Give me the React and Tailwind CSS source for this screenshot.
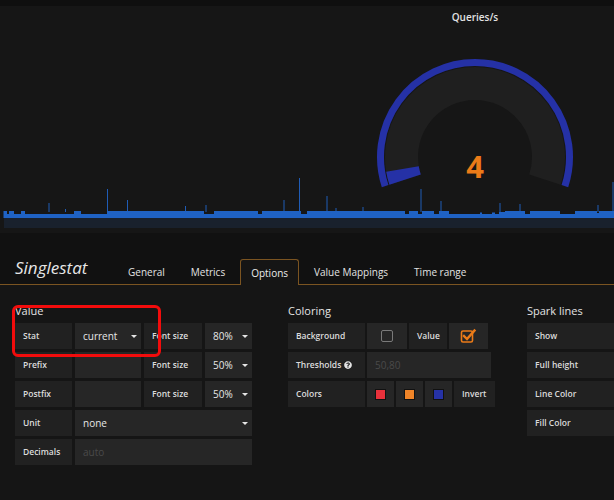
import React from "react";
import { FaQuestionCircle } from "react-icons/fa";

const CX = 475;
const CY = 157;
function pt(r, deg) {
  const a = (deg * Math.PI) / 180;
  return [CX + r * Math.cos(a), CY + r * Math.sin(a)];
}
function arc(r, a0, a1) {
  const [x0, y0] = pt(r, a0);
  const [x1, y1] = pt(r, a1);
  const large = a1 - a0 > 180 ? 1 : 0;
  return `M ${x0.toFixed(2)} ${y0.toFixed(2)} A ${r} ${r} 0 ${large} 1 ${x1.toFixed(2)} ${y1.toFixed(2)}`;
}

const steps = [
  [3.5, 211], [7, 214], [9, 211], [14, 214], [21, 211], [25, 214], [74, 211], [81, 214],
  [107, 211], [204, 214], [214, 211], [258, 214], [262, 211], [301, 214], [307, 211],
  [405, 214], [409, 211], [418, 214], [422, 211], [434, 214], [439, 211], [449, 214],
  [480, 212.5], [482, 214], [492, 212.5], [495, 214], [499, 212], [505, 211], [525, 214],
  [530, 211], [560, 214], [575, 211], [597, 213], [599, 211],
];
function sparkPath() {
  let d = "M 3.5 218";
  steps.forEach(([x, t], i) => {
    const next = i < steps.length - 1 ? steps[i + 1][0] : 614;
    d += ` L ${x} ${t} L ${next} ${t}`;
  });
  d += " L 614 218 Z";
  return d;
}
const spikes = [
  [49, 203], [65.5, 209], [107.5, 189], [127.5, 200], [185.5, 206], [206, 205], [284, 200],
  [299.5, 178], [327, 196], [336, 208], [363, 207], [421, 189], [441, 201], [500, 203],
  [520, 204], [598, 205], [613, 182],
];

const START = 162;
const END = 378;
const VALUE_END = START + (4 / 100) * (END - START);

function Caret() {
  return (
    <span className="w-0 h-0 border-l-[3px] border-r-[3px] border-t-[3.5px] border-l-transparent border-r-transparent border-t-[#e6e6e6]" />
  );
}

function Label({ className, children }) {
  return (
    <div
      className={
        "h-[26px] shrink-0 bg-[#212121] flex items-center pl-[8px] text-[8.5px] font-semibold text-[#dcdcdc] whitespace-nowrap overflow-hidden " +
        className
      }
    >
      {children}
    </div>
  );
}

function Input({ className, children, placeholder }) {
  return (
    <div
      className={
        "h-[26px] shrink-0 bg-[#262626] flex items-center pl-[8px] text-[10px] whitespace-nowrap " +
        (placeholder ? "text-[#4a4a4a] " : "text-[#e6e6e6] ") +
        className
      }
    >
      {children}
    </div>
  );
}

function Select({ className, children }) {
  return (
    <div
      className={
        "h-[26px] shrink-0 bg-[#262626] flex items-center justify-between pl-[8px] pr-[4px] text-[10px] text-[#e6e6e6] whitespace-nowrap " +
        className
      }
    >
      <span>{children}</span>
      <Caret />
    </div>
  );
}

function Swatch({ className }) {
  return (
    <div className="h-[26px] w-[27px] shrink-0 bg-[#262626] flex items-center justify-center">
      <span className={"w-[11px] h-[11px] border border-[#111] " + className} />
    </div>
  );
}

export default function App() {
  return (
    <div className="relative w-[614px] h-[500px] overflow-hidden bg-[#151515] font-['Open_Sans',sans-serif]">
      {/* top strip */}
      <div className="h-[6px] bg-[#0f0f0f]" />

      {/* singlestat panel */}
      <div className="relative h-[227px] bg-[#161616]">
        <svg width="614" height="227" viewBox="0 6 614 227" className="block">
          <path d={arc(73.5, START, END)} fill="none" stroke="#1f1f1f" strokeWidth="33" />
          <path d={arc(73.5, START, VALUE_END)} fill="none" stroke="#2531a6" strokeWidth="33" />
          <path d={arc(94.5, START, END)} fill="none" stroke="#2531a6" strokeWidth="7" />
          <rect x="4" y="218" width="610" height="10" fill="#19212d" />
          {spikes.map(([x, t], i) => (
            <rect key={i} x={x - 0.5} y={t} width="1" height={212 - t} fill="#1f5cb6" />
          ))}
          <path d={sparkPath()} fill="#1f62c4" />
        </svg>
        <div className="absolute left-[375px] top-[5px] w-[200px] text-center text-[10px] leading-[12px] font-semibold text-[#e3e3e3]">
          Queries/s
        </div>
        <div className="absolute left-[435px] top-[145px] w-[80px] text-center text-[31px] leading-[31px] font-bold text-[#eb7b18]">
          4
        </div>
      </div>

      {/* editor header */}
      <div className="h-[52px] bg-[#111111] border-b border-[#7b5421] flex items-end">
        <div className="w-[117px] pl-[15px] h-[20px] leading-[20px] mb-[6px] text-[17px] italic text-[#e6e6e6]">
          Singlestat
        </div>
        <div className="flex gap-[4px] items-end">
          <div className="h-[26px] -mb-px px-[10px] pt-[1px] flex items-center text-[10px] text-[#e3e3e3] border border-transparent">
            General
          </div>
          <div className="h-[26px] -mb-px px-[10px] pt-[1px] flex items-center text-[10px] text-[#e3e3e3] border border-transparent">
            Metrics
          </div>
          <div className="h-[26px] -mb-px px-[10px] pt-[1px] flex items-center text-[10px] text-[#ececec] bg-[#151515] border border-b-0 border-[#7b5421] rounded-t-[3px]">
            Options
          </div>
          <div className="h-[26px] -mb-px px-[10px] pt-[1px] flex items-center text-[10px] text-[#e3e3e3] border border-transparent">
            Value Mappings
          </div>
          <div className="h-[26px] -mb-px px-[10px] pt-[1px] flex items-center text-[10px] text-[#e3e3e3] border border-transparent">
            Time range
          </div>
        </div>
      </div>

      {/* options content */}
      <div className="flex pl-[15px] pt-[19px]">
        {/* Value */}
        <div className="w-[237px] shrink-0">
          <div className="h-[14px] leading-[14px] text-[11px] text-[#e3e3e3] mb-[5px]">Value</div>
          <div className="flex flex-col gap-[3px]">
            <div className="flex gap-[3px]">
              <Label className="w-[57px]">Stat</Label>
              <Select className="w-[66px]">current</Select>
              <Label className="w-[58px]">Font size</Label>
              <Select className="w-[47px]">80%</Select>
            </div>
            <div className="flex gap-[3px]">
              <Label className="w-[57px]">Prefix</Label>
              <Input className="w-[66px]" />
              <Label className="w-[58px]">Font size</Label>
              <Select className="w-[47px]">50%</Select>
            </div>
            <div className="flex gap-[3px]">
              <Label className="w-[57px]">Postfix</Label>
              <Input className="w-[66px]" />
              <Label className="w-[58px]">Font size</Label>
              <Select className="w-[47px]">50%</Select>
            </div>
            <div className="flex gap-[3px]">
              <Label className="w-[57px]">Unit</Label>
              <Select className="w-[177px]">none</Select>
            </div>
            <div className="flex gap-[3px]">
              <Label className="w-[57px]">Decimals</Label>
              <Input className="w-[177px]" placeholder>
                auto
              </Input>
            </div>
          </div>
        </div>

        {/* Coloring */}
        <div className="ml-[36px] w-[207px] shrink-0">
          <div className="h-[14px] leading-[14px] text-[11px] text-[#e3e3e3] mb-[5px]">Coloring</div>
          <div className="flex flex-col gap-[3px]">
            <div className="flex gap-[2px]">
              <Label className="w-[77px]">Background</Label>
              <div className="h-[26px] w-[40px] shrink-0 bg-[#262626] flex items-center justify-center">
                <span className="w-[12px] h-[12px] border-[1.5px] border-[#7a7a7a] rounded-[2px]" />
              </div>
              <Label className="w-[38px]">Value</Label>
              <div className="h-[26px] w-[39px] shrink-0 bg-[#262626] flex items-center justify-center">
                <svg width="17" height="16" viewBox="0 0 17 16">
                  <rect x="1.5" y="3" width="11" height="11" rx="1.5" fill="none" stroke="#eb7b18" strokeWidth="1.6" />
                  <path d="M4 8 L7 11 L14.5 2.5" fill="none" stroke="#eb7b18" strokeWidth="2.4" strokeLinecap="square" />
                </svg>
              </div>
            </div>
            <div className="flex gap-[2px]">
              <Label className="w-[77px]">
                <span>Thresholds</span>
                <FaQuestionCircle className="ml-[3px] text-[#e3e3e3]" size={8} />
              </Label>
              <Input className="w-[124px]" placeholder>
                50,80
              </Input>
            </div>
            <div className="flex gap-[2px]">
              <Label className="w-[77px]">Colors</Label>
              <Swatch className="bg-[#e8313b]" />
              <Swatch className="bg-[#ef8428]" />
              <Swatch className="bg-[#2632a6]" />
              <Label className="w-[41px]">Invert</Label>
            </div>
          </div>
        </div>

        {/* Spark lines */}
        <div className="ml-[32px] w-[110px] shrink-0">
          <div className="h-[14px] leading-[14px] text-[11px] text-[#e3e3e3] mb-[5px]">Spark lines</div>
          <div className="flex flex-col gap-[3px]">
            <Label className="w-[110px]">Show</Label>
            <Label className="w-[110px]">Full height</Label>
            <Label className="w-[110px]">Line Color</Label>
            <Label className="w-[110px]">Fill Color</Label>
          </div>
        </div>
      </div>

      {/* red annotation box */}
      <div className="absolute left-[12px] top-[305px] w-[149px] h-[52px] border-[3px] border-[#f20c0c] rounded-[6px] pointer-events-none" />
    </div>
  );
}
